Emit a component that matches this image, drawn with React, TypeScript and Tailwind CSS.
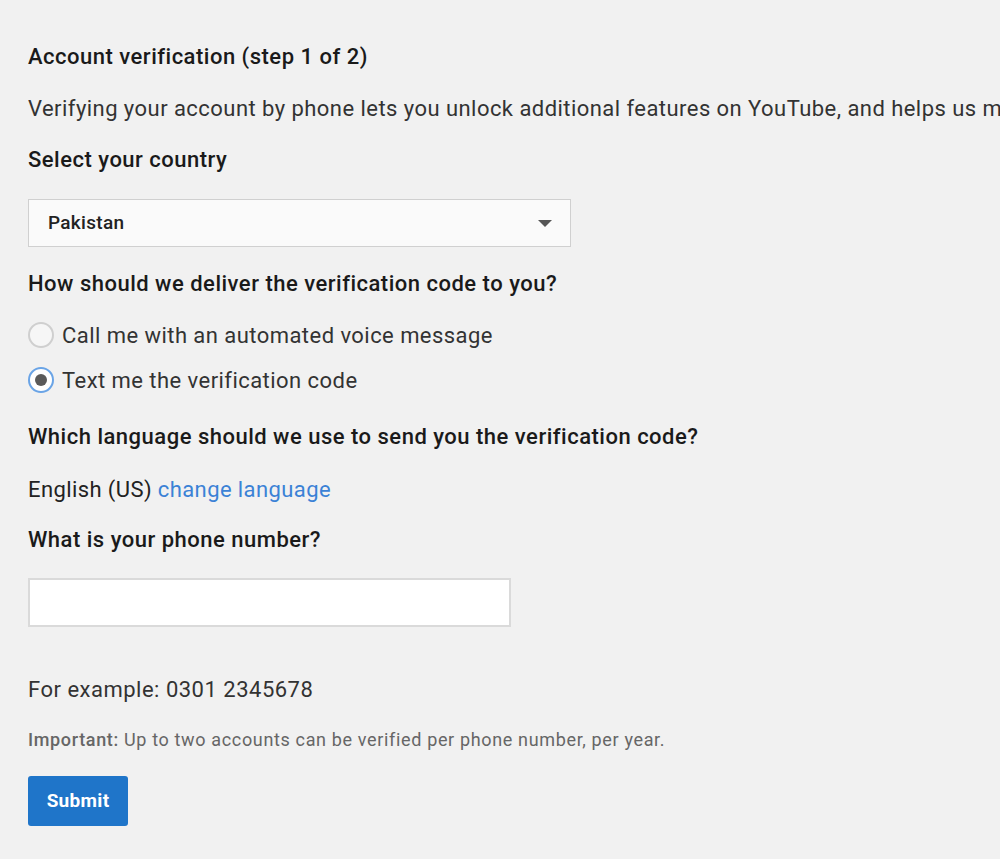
export default function App() {
  return (
    <div
      className="min-h-[859px] w-[1000px] overflow-hidden bg-[#f1f1f1] text-[#222]"
      style={{ fontFamily: 'Roboto, "Liberation Sans", sans-serif' }}
    >
      <div className="flex flex-col pl-[28px] pt-[43px]">
        <h1 className="h-[28px] text-[22px] font-medium leading-[28px] tracking-[0.5px] text-[#1a1a1a]">
          Account verification (step 1 of 2)
        </h1>

        <p className="mt-[24px] h-[28px] w-[972px] overflow-hidden whitespace-nowrap text-[22px] leading-[28px] tracking-[0.45px] text-[#333]">
          Verifying your account by phone lets you unlock additional features on YouTube, and helps us m
        </p>

        <label className="mt-[23px] h-[28px] text-[22px] font-medium leading-[28px] tracking-[0.5px] text-[#1a1a1a]">
          Select your country
        </label>

        {/* country dropdown */}
        <div className="mt-[25px] flex h-[48px] w-[543px] items-center justify-between border border-[#d0d0d0] bg-[#fafafa] pl-[19px] pr-[18px]">
          <span className="text-[19px] font-medium tracking-[0.3px] text-[#222]">Pakistan</span>
          <svg width="14" height="8" viewBox="0 0 14 8" className="mt-[1px]">
            <path d="M0 0 L14 0 L7 7 Z" fill="#555" />
          </svg>
        </div>

        <div className="mt-[23px] h-[28px] text-[22px] font-medium leading-[28px] tracking-[0.5px] text-[#1a1a1a]">
          How should we deliver the verification code to you?
        </div>

        <div className="mt-[22px] flex h-[30px] items-center">
          <span className="h-[26px] w-[26px] rounded-full border-2 border-[#cfcfcf] bg-[#f6f6f6]" />
          <span className="ml-[8px] text-[22px] tracking-[0.45px] text-[#333]">Call me with an automated voice message</span>
        </div>

        <div className="mt-[15px] flex h-[30px] items-center">
          <span className="flex h-[26px] w-[26px] items-center justify-center rounded-full border-2 border-[#6aa4e6] bg-white">
            <span className="h-[12px] w-[12px] rounded-full bg-[#5a5a5a]" />
          </span>
          <span className="ml-[8px] text-[22px] tracking-[0.45px] text-[#333]">Text me the verification code</span>
        </div>

        <div className="mt-[28px] h-[28px] text-[22px] font-medium leading-[28px] tracking-[0.5px] text-[#1a1a1a]">
          Which language should we use to send you the verification code?
        </div>

        <div className="mt-[25px] h-[28px] text-[22px] leading-[28px] tracking-[0.4px] text-[#222]">
          English (US) <a className="text-[#3b82d6]">change language</a>
        </div>

        <div className="mt-[22px] h-[28px] text-[22px] font-medium leading-[28px] tracking-[0.5px] text-[#1a1a1a]">
          What is your phone number?
        </div>

        <input
          type="text"
          className="mt-[24px] h-[49px] w-[483px] border-2 border-[#dadada] bg-white px-3 text-[18px] outline-none"
        />

        <div className="mt-[49px] h-[28px] text-[22px] leading-[28px] tracking-[0.5px] text-[#333]">
          For example: 0301 2345678
        </div>

        <div className="mt-[24px] h-[24px] text-[18px] leading-[24px] tracking-[0.65px] text-[#666]">
          <span className="font-medium">Important:</span> Up to two accounts can be verified per phone number, per year.
        </div>

        <button className="mt-[24px] h-[50px] w-[100px] rounded-[3px] bg-[#1f75c9] text-[19px] font-bold tracking-[0.3px] text-white">
          Submit
        </button>
      </div>
    </div>
  );
}
